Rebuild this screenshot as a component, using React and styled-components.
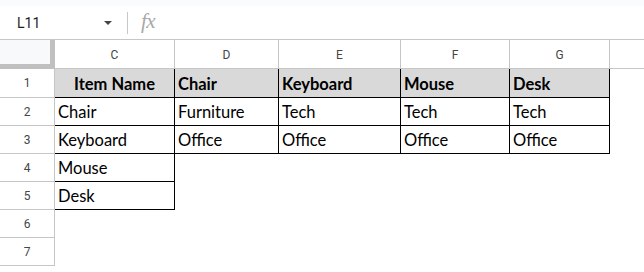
import React from "react";
import styled, { createGlobalStyle } from "styled-components";

const GlobalStyle = createGlobalStyle`
  html, body {
    margin: 0;
    padding: 0;
    background: #ffffff;
  }
  body {
    font-family: Roboto, "Liberation Sans", Arial, sans-serif;
  }
`;

const columns = [
  { letter: "C", width: 120 },
  { letter: "D", width: 104 },
  { letter: "E", width: 122 },
  { letter: "F", width: 109 },
  { letter: "G", width: 100 },
];

const rows = [
  ["Item Name", "Chair", "Keyboard", "Mouse", "Desk"],
  ["Chair", "Furniture", "Tech", "Tech", "Tech"],
  ["Keyboard", "Office", "Office", "Office", "Office"],
  ["Mouse", null, null, null, null],
  ["Desk", null, null, null, null],
  [null, null, null, null, null],
  [null, null, null, null, null],
];

const Page = styled.div`
  width: 644px;
  height: 272px;
  overflow: hidden;
  display: flex;
  flex-direction: column;
`;

const TopStrip = styled.div`
  height: 6px;
  background: #f9fbfd;
`;

const FormulaBar = styled.div`
  height: 33px;
  display: flex;
  align-items: center;
  border-bottom: 1px solid #c4c7c5;
`;

const NameBox = styled.div`
  width: 112px;
  padding-left: 17px;
  display: flex;
  align-items: center;
  justify-content: space-between;
  box-sizing: border-box;
  font-size: 14px;
  color: #1f1f1f;
`;

const Caret = styled.span`
  width: 0;
  height: 0;
  border-left: 4.5px solid transparent;
  border-right: 4.5px solid transparent;
  border-top: 4.5px solid #444746;
  margin-top: 1px;
`;

const Divider = styled.div`
  width: 1px;
  height: 22px;
  background: #c7c7c7;
  margin-left: 15px;
`;

const Fx = styled.span`
  margin-left: 13px;
  font-family: "Liberation Serif", "DejaVu Serif", serif;
  font-style: italic;
  font-size: 21px;
  line-height: 1;
  color: #a8a8a8;
  letter-spacing: -0.5px;
  margin-top: -2px;
`;

const Grid = styled.div`
  display: grid;
  grid-template-columns: 55px ${columns.map((c) => `${c.width}px`).join(" ")} 1fr;
  grid-auto-rows: 28px;
  grid-template-rows: 29px 29px;
`;

const Corner = styled.div`
  background: #f8f9fa;
  border-right: 5px solid #c0c0c0;
  border-bottom: 5px solid #c0c0c0;
  box-sizing: border-box;
`;

const ColumnHead = styled.div`
  display: flex;
  align-items: center;
  justify-content: center;
  border-right: 1px solid #c4c7c5;
  border-bottom: 1px solid #c4c7c5;
  font-size: 12px;
  color: #444746;
  box-sizing: border-box;
  padding-top: 1px;
`;

const RowHead = styled.div`
  display: flex;
  align-items: center;
  justify-content: center;
  border-right: 1px solid #c4c7c5;
  border-bottom: 1px solid #c4c7c5;
  font-size: 12px;
  color: #444746;
  box-sizing: border-box;
`;

const Cell = styled.div`
  display: flex;
  align-items: flex-end;
  justify-content: ${(p) => (p.$center ? "center" : "flex-start")};
  padding: 0 3px 5px;
  box-sizing: border-box;
  border-right: 1px solid ${(p) => (p.$boxed ? "#000000" : "transparent")};
  border-bottom: 1px solid ${(p) => (p.$boxed ? "#000000" : "transparent")};
  background: ${(p) => (p.$head ? "#d9d9d9" : "transparent")};
  font-family: Lato, "Open Sans", "Liberation Sans", sans-serif;
  font-size: 16.5px;
  line-height: 16px;
  font-weight: ${(p) => (p.$head ? 700 : 400)};
  color: #000000;
  white-space: nowrap;
  overflow: hidden;
`;

const Filler = styled.div`
  border-bottom: 1px solid ${(p) => (p.$head ? "#c4c7c5" : "transparent")};
  box-sizing: border-box;
`;

export default function App() {
  return (
    <>
      <GlobalStyle />
      <Page>
        <TopStrip />
        <FormulaBar>
          <NameBox>
            L11
            <Caret />
          </NameBox>
          <Divider />
          <Fx>fx</Fx>
        </FormulaBar>
        <Grid>
          <Corner />
          {columns.map((col) => (
            <ColumnHead key={col.letter}>{col.letter}</ColumnHead>
          ))}
          <Filler $head />
          {rows.map((row, r) => (
            <React.Fragment key={r}>
              <RowHead>{r + 1}</RowHead>
              {row.map((value, c) => {
                const boxed = r < 3 || (c === 0 && r < 5);
                return (
                  <Cell
                    key={c}
                    $boxed={boxed}
                    $head={r === 0}
                    $center={r === 0 && c === 0}
                  >
                    {value}
                  </Cell>
                );
              })}
              <Filler />
            </React.Fragment>
          ))}
        </Grid>
      </Page>
    </>
  );
}
